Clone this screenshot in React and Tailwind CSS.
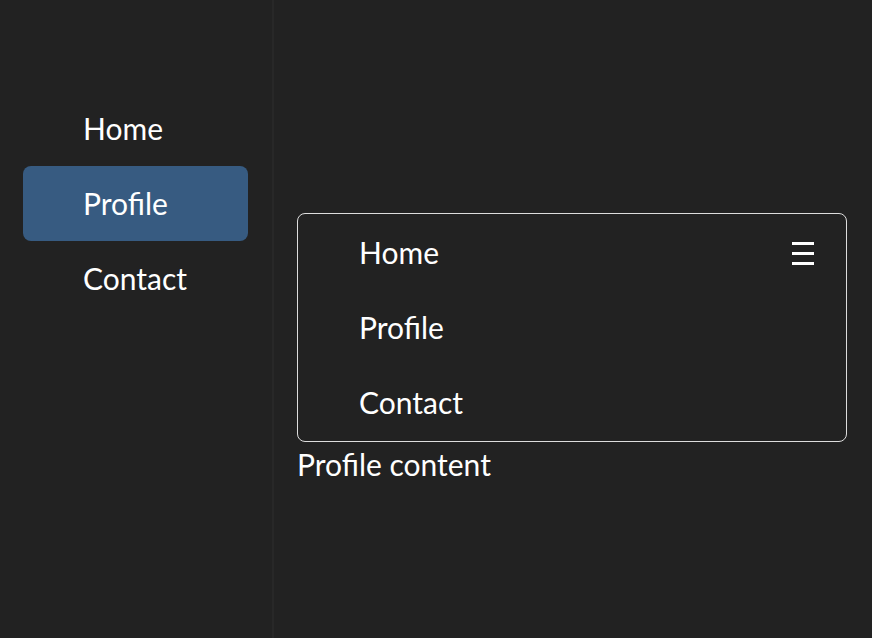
export default function App() {
  const items = ["Home", "Profile", "Contact"];
  const active = "Profile";

  return (
    <div
      className="flex h-[638px] bg-[#222222] text-white"
      style={{ fontFamily: "Lato, 'Noto Sans', sans-serif" }}
    >
      {/* Sidebar */}
      <aside className="w-[274px] shrink-0 border-r-2 border-[#282828] pt-[91px] pl-[23px] pr-[24px]">
        <nav className="flex flex-col">
          {items.map((item) => (
            <div
              key={item}
              className={
                item === active
                  ? "h-[75px] flex items-center pl-[60px] rounded-lg bg-[#375b81] text-[30px]"
                  : "h-[75px] flex items-center pl-[60px] rounded-lg text-[30px]"
              }
            >
              {item}
            </div>
          ))}
        </nav>
      </aside>

      {/* Main */}
      <main className="flex-1 pt-[213px] pl-[23px] pr-[25px]">
        <div className="relative border border-[#dddddd] rounded-lg py-[1px]">
          {items.map((item) => (
            <div
              key={item}
              className="h-[75px] flex items-center pl-[61px] text-[30px]"
            >
              {item}
            </div>
          ))}
          {/* Menu toggle */}
          <div className="absolute top-[28px] right-[32px] flex flex-col gap-[7px]">
            <span className="block w-[22px] h-[3px] bg-white" />
            <span className="block w-[22px] h-[3px] bg-white" />
            <span className="block w-[22px] h-[3px] bg-white" />
          </div>
        </div>
        <p className="text-[30px] leading-[44px]">Profile content</p>
      </main>
    </div>
  );
}
